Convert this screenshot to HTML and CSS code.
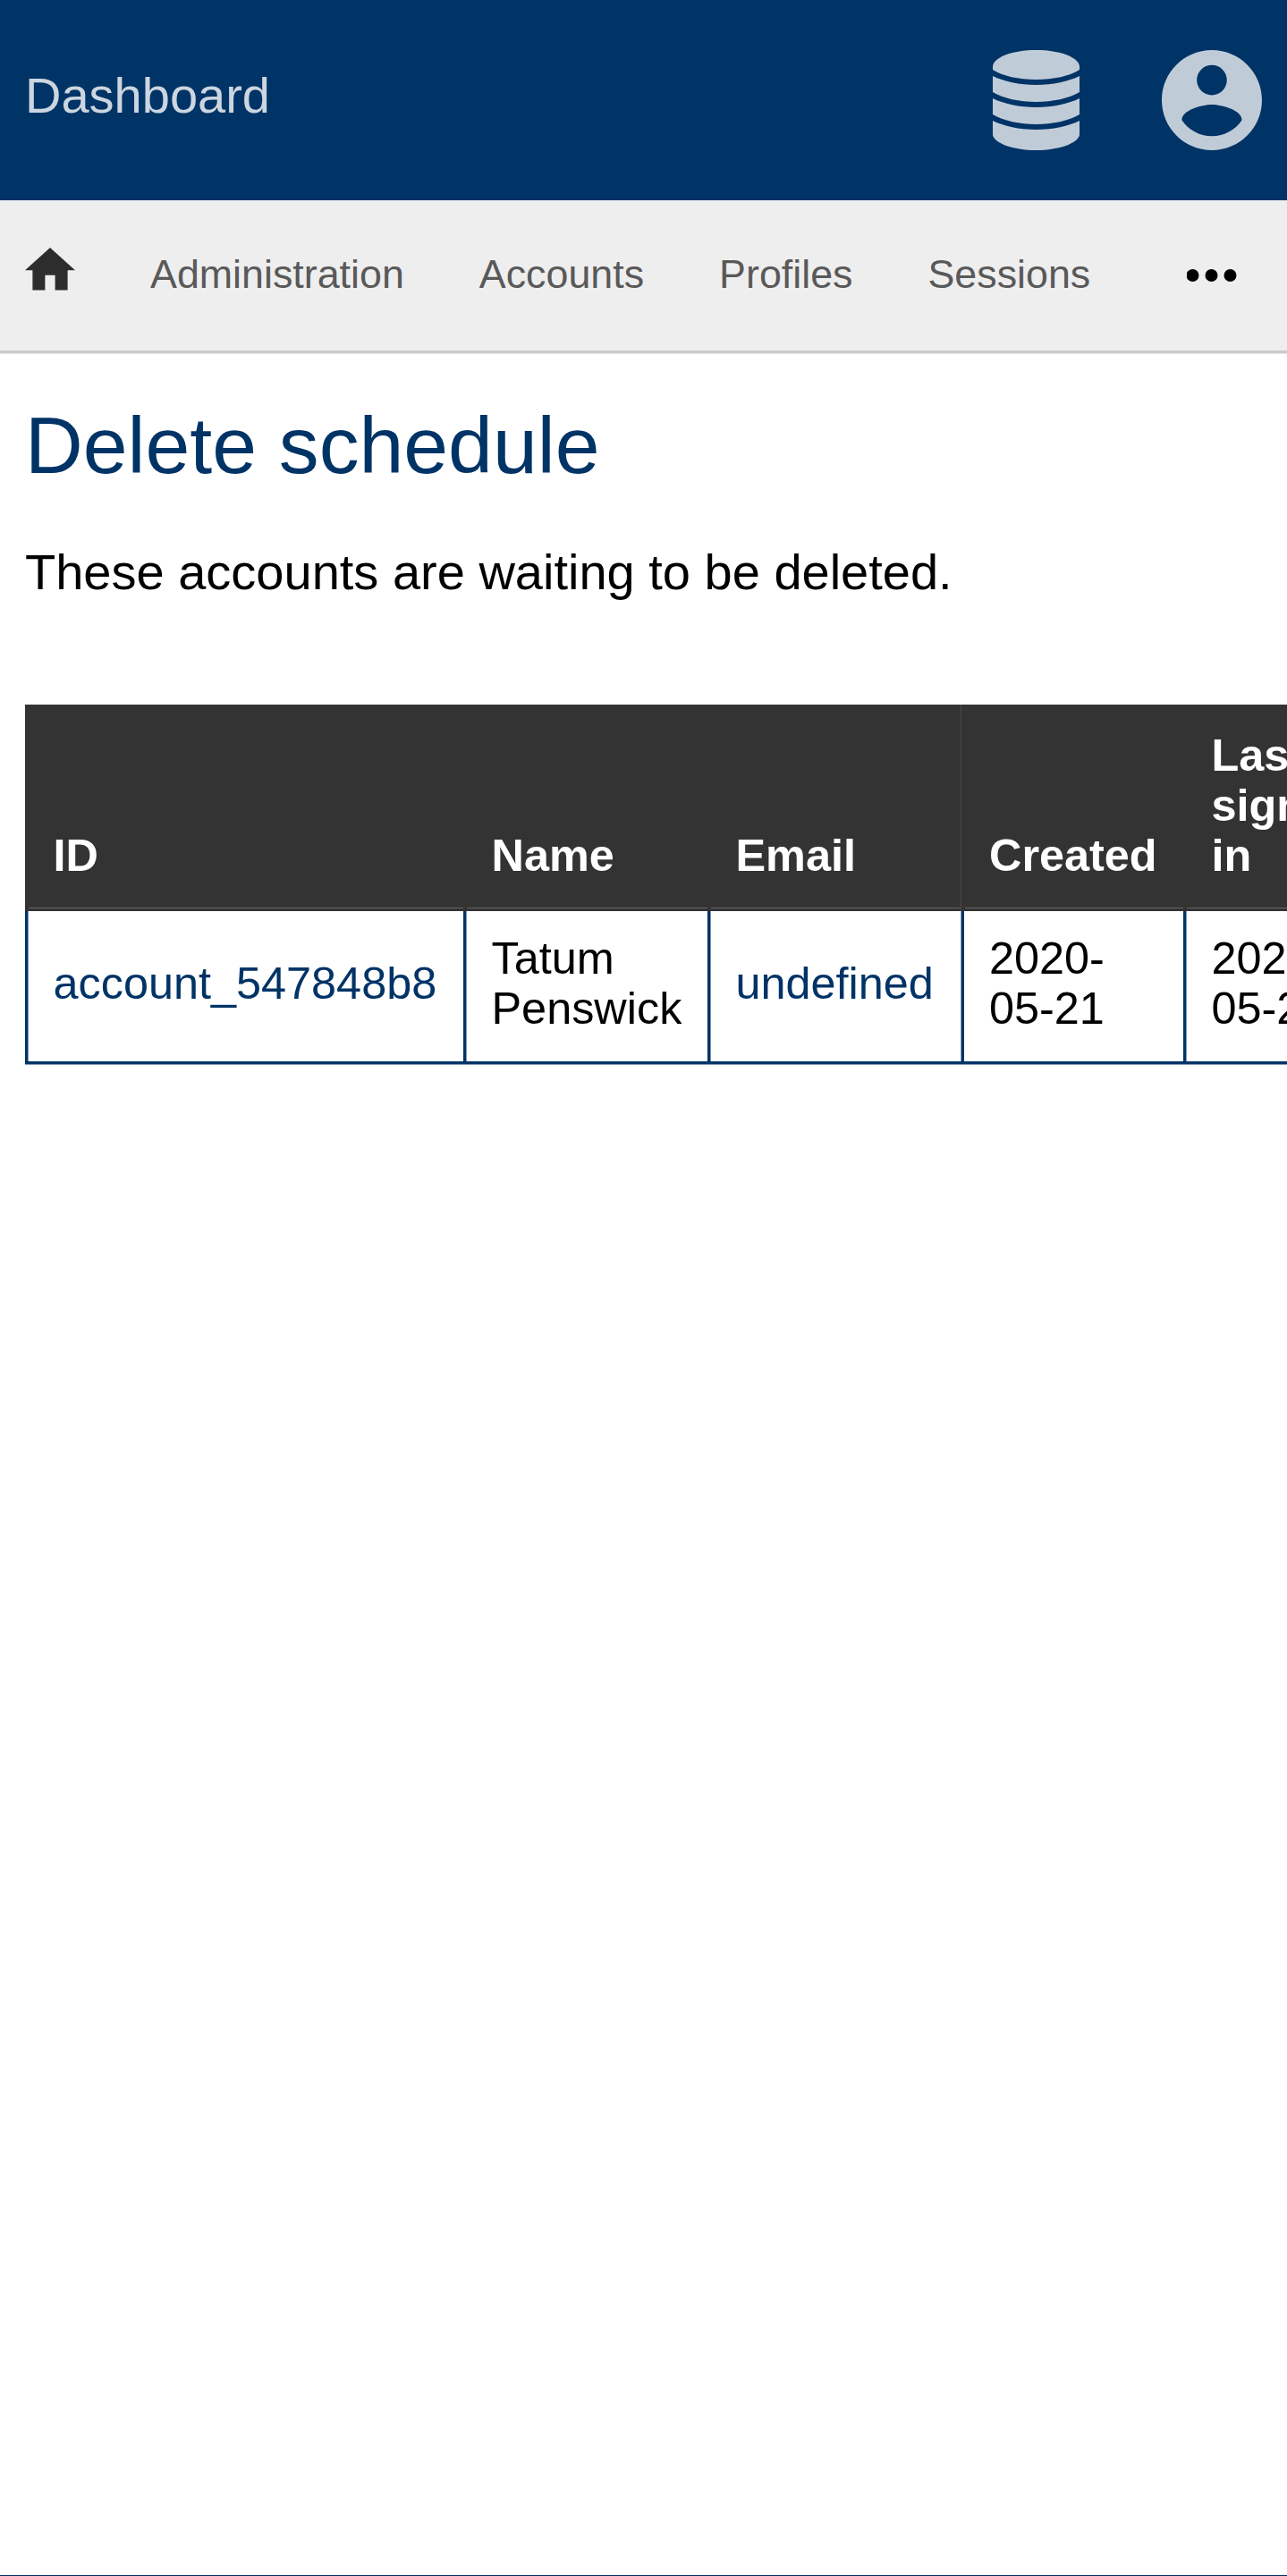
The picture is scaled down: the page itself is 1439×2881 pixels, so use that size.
FILE: index.html
```html
<!DOCTYPE html>
<html lang="en">
<head>
<meta charset="utf-8">
<title>Delete schedule</title>
<link rel="stylesheet" href="styles.css">
</head>
<body>
<header class="topbar">
  <a class="brand">Dashboard</a>
  <div class="actions">
    <svg class="icon-db" viewBox="0 0 97 112" aria-label="Administrator">
      <path d="M0 18C1 8 22 0 48.500 0S96 8 97 18v4C86 29 68 33 48.500 33S11 29 0 22z"/>
      <path d="M0 29c12 6 30 10 48.500 10S85 35 97 29v18c-12 7-30 11-48.500 11S12 54 0 47z"/>
      <path d="M0 54c12 6 30 10 48.500 10S85 60 97 54v18c-12 7-30 11-48.500 11S12 79 0 72z"/>
      <path d="M0 79c12 6 30 10 48.500 10S85 85 97 79v16c-2 9-22 17-48.500 17S2 104 0 95z"/>
    </svg>
    <svg class="icon-user" viewBox="2 2 20 20" aria-label="Account"><path d="M12 2C6.480 2 2 6.480 2 12s4.480 10 10 10 10-4.480 10-10S17.520 2 12 2zm0 3c1.660 0 3 1.340 3 3s-1.340 3-3 3-3-1.340-3-3 1.340-3 3-3zm0 14.200c-2.500 0-4.710-1.280-6-3.220.03-1.990 4-3.080 6-3.080 1.990 0 5.970 1.090 6 3.080-1.290 1.940-3.500 3.220-6 3.220z"/></svg>
  </div>
</header>
<nav class="navbar">
  <svg class="icon-home" viewBox="2 3 20 17" aria-label="Home"><path d="M10 20v-6h4v6h5v-8h3L12 3 2 12h3v8z"/></svg>
  <a>Administration</a>
  <a>Accounts</a>
  <a>Profiles</a>
  <a>Sessions</a>
  <svg class="icon-more" viewBox="0 0 56 14" aria-label="More"><circle cx="6.500" cy="7" r="7"/><circle cx="27.500" cy="7" r="7"/><circle cx="48.500" cy="7" r="7"/></svg>
</nav>
<main class="content">
  <h1>Delete schedule</h1>
  <p>These accounts are waiting to be deleted.</p>
  <table class="accounts">
    <colgroup><col class="c-id"><col class="c-name"><col class="c-email"><col class="c-created"><col class="c-last"></colgroup>
    <thead>
      <tr><th>ID</th><th>Name</th><th class="seam">Email</th><th class="after-seam">Created</th><th>Last sign in</th></tr>
    </thead>
    <tbody>
      <tr><td><a>account_547848b8</a></td><td>Tatum Penswick</td><td class="seam"><a>undefined</a></td><td class="after-seam">2020-<br>05-21</td><td>2020-<br>05-21</td></tr>
    </tbody>
  </table>
</main>
<footer class="footer"></footer>
</body>
</html>
```
FILE: styles.css
```css
* { box-sizing: border-box; }
html, body { margin: 0; height: 2881px; overflow: hidden; }
body {
  display: flex;
  flex-direction: column;
  width: 1439px;
  background: #fff;
  color: #000;
  font: 56px/64px "Liberation Sans", Arial, sans-serif;
}
svg { display: block; flex: none; }
.topbar {
  display: flex;
  align-items: center;
  justify-content: space-between;
  flex: none;
  height: 224px;
  padding: 0 28px;
  background: #036;
}
.brand { color: #ccd6e0; padding-bottom: 11px; }
.actions { display: flex; gap: 92px; fill: #bfccd8; }
.icon-db { width: 97px; height: 112px; }
.icon-user { width: 112px; height: 112px; }
.navbar {
  display: flex;
  align-items: center;
  gap: 84px;
  flex: none;
  height: 171px;
  padding: 0 56px 0 28px;
  background: #eee;
  border-bottom: 3px solid #ccc;
  box-shadow: 0 1px #e5e5e5;
  color: #595959;
  font-size: 44.8px;
  line-height: 52px;
}
.navbar a { padding-bottom: 4px; }
.icon-home { width: 56px; height: 47.6px; fill: #2d2d2d; margin-bottom: 14px; }
.icon-more { width: 56px; height: 14px; margin-left: auto; fill: #000; }
.content { flex: 1; min-height: 0; padding: 0 28px; overflow: hidden; }
h1 {
  margin: 51px 0 0;
  color: #036;
  font-size: 89.6px;
  font-weight: 400;
  line-height: 104px;
}
p { margin: 58px 0 0; }
.accounts {
  width: 1532px;
  margin-top: 116px;
  border-spacing: 0;
  table-layout: fixed;
  font-size: 50.4px;
  line-height: 56px;
  text-align: left;
}
.c-id { width: 490px; }
.c-name { width: 273px; }
.c-email { width: 284px; }
.c-created { width: 248px; }
.c-last { width: 237px; }
th {
  height: 231px;
  padding: 28px 28px 34px 31.5px;
  vertical-align: bottom;
  background: linear-gradient(#666, #666) 4px 227px / 100% 1px no-repeat #333;
  color: #fff;
}
th:last-child { padding-right: 80px; }
th.seam { box-shadow: inset -1px 0 #484848; }
th.after-seam { padding-left: 31px; }
td {
  height: 171px;
  padding: 25px 20px 31px 28.5px;
  border-left: 3px solid #036;
  border-bottom: 3px solid #036;
  box-shadow: inset 1px 0 #7f99b2, 0 1px #7f99b2;
}
td.seam { box-shadow: inset 1px 0 #7f99b2, inset -1px 0 #7f99b2, 0 1px #7f99b2; }
td.after-seam { padding-left: 28px; box-shadow: 0 1px #7f99b2; }
td a { color: #036; }
.footer { flex: none; height: 1px; background: #036; }
```
